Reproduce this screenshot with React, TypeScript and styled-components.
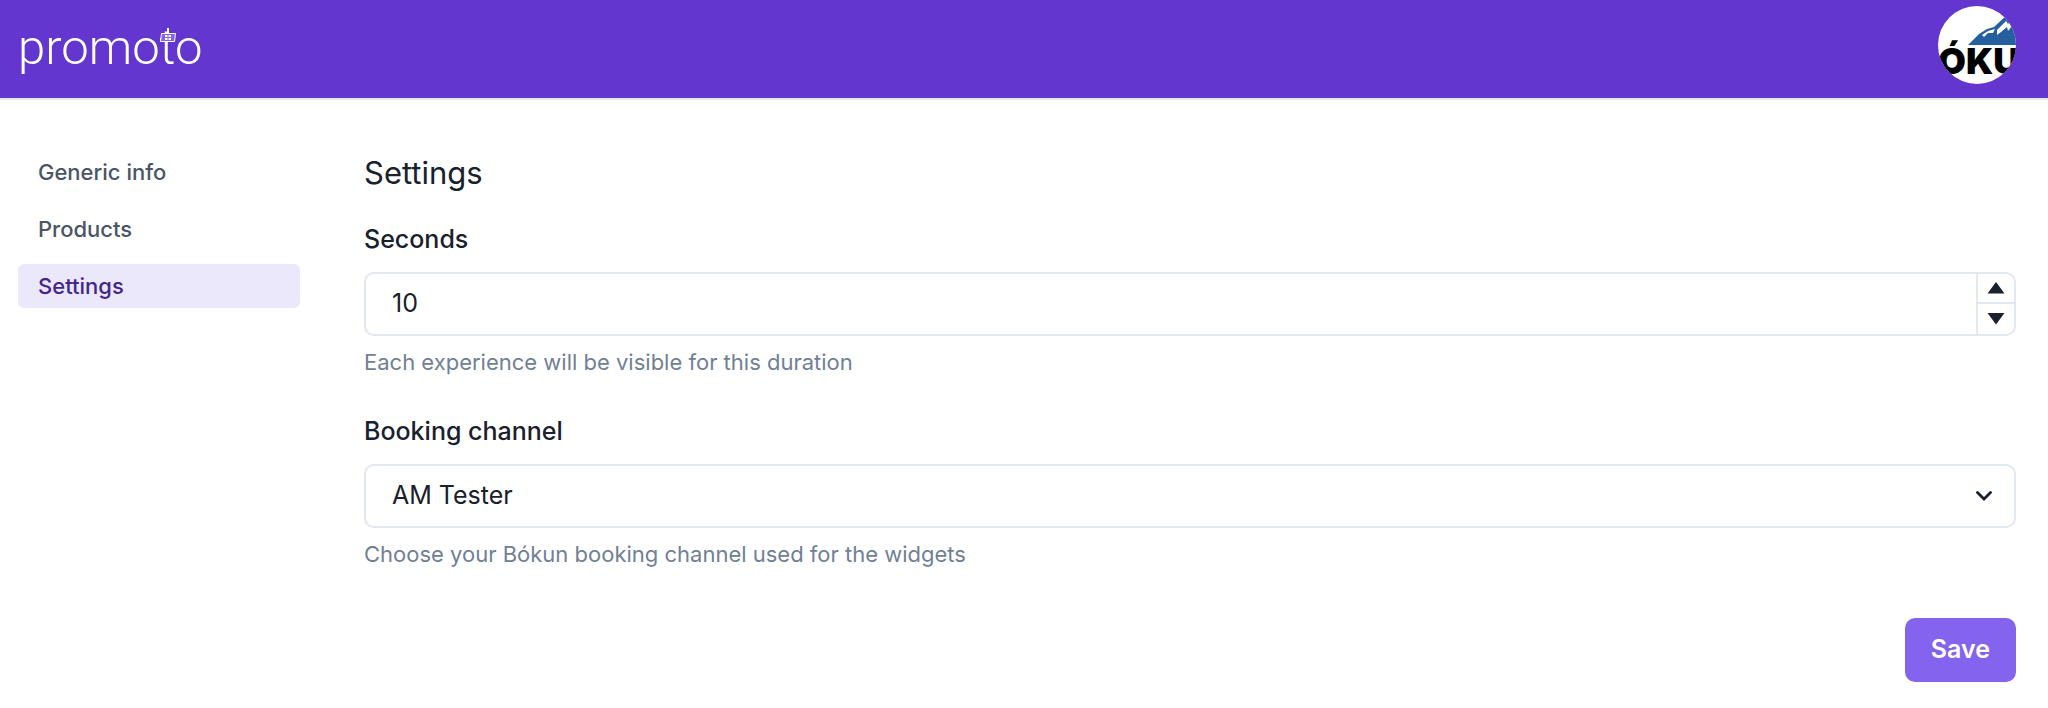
import React, { useState } from "react";
import styled, { createGlobalStyle } from "styled-components";

const GlobalStyle = createGlobalStyle`
  *, *::before, *::after { box-sizing: border-box; }
  body {
    margin: 0;
    background: #ffffff;
    color: #1a202c;
    font-family: Inter, "Liberation Sans", sans-serif;
    font-size: 25px;
    line-height: 32px;
  }
  input, select, button { font: inherit; color: inherit; }
`;

const Header = styled.header`
  display: flex;
  justify-content: space-between;
  align-items: flex-start;
  padding: 6px 32px 14px 18px;
  background: #6336d0;
  border-bottom: 2px solid #e2e8f0;
`;

const Brand = styled.a`
  position: relative;
  height: 78px;
  color: #ffffff;
  font-family: Roboto, sans-serif;
  font-size: 49px;
  font-weight: 300;
  line-height: 84px;
  text-decoration: none;
`;

const SignMark = styled.svg`
  position: absolute;
  top: 22px;
  right: 26px;
`;

const Avatar = styled.svg`
  display: block;
  width: 78px;
  height: 78px;
`;

const Page = styled.div`
  display: flex;
  align-items: flex-start;
  gap: 64px;
  padding: 50px 32px 26px 18px;
`;

const Nav = styled.nav`
  display: flex;
  flex: 0 0 282px;
  flex-direction: column;
  gap: 13px;
`;

const NavLink = styled.a<{ $active?: boolean }>`
  padding: 6px 20px;
  border-radius: 6px;
  background: ${(p) => (p.$active ? "#ebe8fb" : "transparent")};
  color: ${(p) => (p.$active ? "#44258f" : "#4a5568")};
  font-size: 22px;
  font-weight: 500;
  text-decoration: none;
`;

const Form = styled.form`
  display: flex;
  flex: 1;
  flex-direction: column;
`;

const Title = styled.h1`
  margin: 1px 0 28px;
  font-size: 31px;
  font-weight: 400;
  line-height: 44px;
`;

const Field = styled.div`
  display: flex;
  flex-direction: column;
  margin-bottom: 37px;
`;

const Label = styled.label`
  margin-bottom: 17px;
  font-weight: 500;
`;

const Control = styled.div`
  position: relative;
  display: flex;
  height: 64px;
  border: 2px solid #e2e8f0;
  border-radius: 10px;
  overflow: hidden;
`;

const NumberInput = styled.input`
  flex: 1;
  min-width: 0;
  padding: 0 26px 2px;
  border: 0;
  background: transparent;
  outline: none;
  appearance: textfield;
  &::-webkit-inner-spin-button, &::-webkit-outer-spin-button {
    margin: 0;
    appearance: none;
  }
`;

const Stepper = styled.div`
  display: grid;
  flex: 0 0 38px;
  grid-template-rows: 28px 32px;
  border-left: 2px solid #e2e8f0;
`;

const StepButton = styled.button`
  display: flex;
  align-items: center;
  justify-content: center;
  padding: 0;
  border: 0;
  background: transparent;
  & + & { border-top: 2px solid #e2e8f0; }
`;

const Select = styled.select`
  flex: 1;
  padding: 0 64px 2px 26px;
  border: 0;
  background: transparent;
  outline: none;
  appearance: none;
`;

const Chevron = styled.svg`
  position: absolute;
  top: 25px;
  right: 22px;
  pointer-events: none;
`;

const Hint = styled.p`
  margin: 10px 0 0;
  color: #718096;
  font-size: 22px;
`;

const SaveButton = styled.button`
  align-self: flex-end;
  height: 64px;
  margin-top: 11px;
  padding: 0 26px 2px;
  border: 0;
  border-radius: 10px;
  background: #8463ee;
  color: #ffffff;
  font-weight: 600;
`;

function CompanyAvatar() {
  return (
    <Avatar viewBox="0 0 78 78" role="img" aria-label="ÓKU">
      <clipPath id="round"><circle cx="39" cy="39" r="39" /></clipPath>
      <g clipPath="url(#round)">
        <rect width="78" height="78" fill="#ffffff" />
        <path d="M30 39 41 28 49 23 56 21 70 8 78 14V39Z" fill="#265f9e" />
        <path d="M44 29 50 25 57 23 55 27 50 27 46 31Z" fill="#ffffff" />
        <path d="M59 24 68 15 70 18 73 15 74 20 70 25 69 21 63 26 59 29Z" fill="#ffffff" />
        <text x="0" y="68" fontFamily="Inter" fontWeight="900" fontSize="36" fill="#000000">ÓKU</text>
      </g>
    </Avatar>
  );
}

export default function App() {
  const [seconds, setSeconds] = useState(10);
  return (
    <>
      <GlobalStyle />
      <Header>
        <Brand href="#">
          promoto
          <SignMark width="16" height="16" viewBox="0 0 16 16" aria-hidden="true">
            <path d="M8 0V5" stroke="#ffffff" strokeWidth="2" />
            <path d="M1.5 5.5H15.5L14.500 13.5H.5Z" fill="#8463ee" stroke="#ffffff" />
            <path d="M5 7h2.5v2H5ZM8.5 7H11v2H8.500ZM5 10h2.500v2H5ZM8.500 10H11v2H8.500Z" fill="#ffffff" />
          </SignMark>
        </Brand>
        <CompanyAvatar />
      </Header>
      <Page>
        <Nav>
          <NavLink href="#">Generic info</NavLink>
          <NavLink href="#">Products</NavLink>
          <NavLink href="#" $active>Settings</NavLink>
        </Nav>
        <Form onSubmit={(e) => e.preventDefault()}>
          <Title>Settings</Title>
          <Field>
            <Label htmlFor="seconds">Seconds</Label>
            <Control>
              <NumberInput id="seconds" type="number" value={seconds} onChange={(e) => setSeconds(Number(e.target.value))} />
              <Stepper>
                <StepButton type="button" aria-label="Increase" onClick={() => setSeconds(seconds + 1)}>
                  <svg width="18" height="12"><path d="M9 0 17.5 11.5H.5Z" fill="#1a202c" /></svg>
                </StepButton>
                <StepButton type="button" aria-label="Decrease" onClick={() => setSeconds(seconds - 1)}>
                  <svg width="18" height="12"><path d="M9 11.5 17.5 0H.5Z" fill="#1a202c" /></svg>
                </StepButton>
              </Stepper>
            </Control>
            <Hint>Each experience will be visible for this duration</Hint>
          </Field>
          <Field>
            <Label htmlFor="channel">Booking channel</Label>
            <Control>
              <Select id="channel"><option>AM Tester</option></Select>
              <Chevron width="16" height="10" viewBox="0 0 16 10" aria-hidden="true">
                <path d="M1.5 1.5 8 8 14.5 1.5" fill="none" stroke="#1a202c" strokeWidth="2.8" strokeLinecap="round" />
              </Chevron>
            </Control>
            <Hint>Choose your Bókun booking channel used for the widgets</Hint>
          </Field>
          <SaveButton type="submit">Save</SaveButton>
        </Form>
      </Page>
    </>
  );
}
